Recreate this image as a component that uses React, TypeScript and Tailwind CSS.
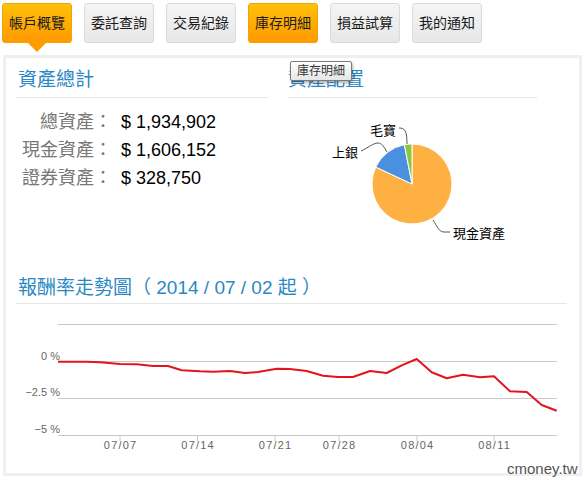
import React from "react";

const tabs = [
  { label: "帳戶概覽", active: true },
  { label: "委託查詢", active: false },
  { label: "交易紀錄", active: false },
  { label: "庫存明細", active: true },
  { label: "損益試算", active: false },
  { label: "我的通知", active: false },
];

const rows = [
  { label: "總資產：", value: "$ 1,934,902" },
  { label: "現金資產：", value: "$ 1,606,152" },
  { label: "證券資產：", value: "$ 328,750" },
];

const pts: [number, number][] = [
  [58, 361.7], [86.7, 361.7], [100, 362.3], [120, 364], [136.7, 364.3], [153, 366], [168, 366],
  [181.7, 370.3], [200, 371.3], [213, 371.7], [230, 371], [245, 373], [258, 372], [276.7, 368.7],
  [290, 369], [306.7, 371], [323, 375.7], [338, 377], [353, 377], [370, 371], [386.7, 373],
  [401.7, 365.3], [416.7, 359], [431.7, 372.3], [446.7, 378.3], [463, 374.7], [480, 377.3],
  [494, 376.3], [510, 391.3], [526.7, 392], [541.7, 405], [556.7, 410.7],
];

const ticks = [
  { x: 120, l: "07/07" },
  { x: 197.5, l: "07/14" },
  { x: 275, l: "07/21" },
  { x: 339, l: "07/28" },
  { x: 417, l: "08/04" },
  { x: 494, l: "08/11" },
];

function slice(cx: number, cy: number, r: number, a0: number, a1: number) {
  const rad = (a: number) => (a * Math.PI) / 180;
  const p = (a: number) => [cx + r * Math.sin(rad(a)), cy - r * Math.cos(rad(a))];
  const [x0, y0] = p(a0);
  const [x1, y1] = p(a1);
  const large = a1 - a0 > 180 ? 1 : 0;
  return `M ${cx} ${cy} L ${x0} ${y0} A ${r} ${r} 0 ${large} 1 ${x1} ${y1} Z`;
}

function Pie() {
  const cx = 412;
  const cy = 184;
  const r = 40;
  return (
    <svg width="249" height="168" viewBox="288 98 249 168" className="block">
      <path d={slice(cx, cy, r, 0, 295)} fill="#ffb042" stroke="#fff" strokeWidth="1" />
      <path d={slice(cx, cy, r, 295, 349)} fill="#4a8fe0" stroke="#fff" strokeWidth="1" />
      <path d={slice(cx, cy, r, 349, 360)} fill="#8cc63f" stroke="#fff" strokeWidth="1" />
      <g fill="none" stroke="#555" strokeWidth="1">
        <path d="M 399 128 C 405 128 407 131 407 144" />
        <path d="M 361 151 C 368 148 373 143 378 143 C 382 143 384 147 387 152" />
        <path d="M 433 220 C 437 226 439 232 444 232 L 450 232" />
      </g>
      <g fontFamily="'Noto Sans CJK TC', sans-serif" fontSize="13" fill="#000">
        <text x="370" y="135">毛寶</text>
        <text x="332" y="157">上銀</text>
        <text x="453" y="238">現金資產</text>
      </g>
    </svg>
  );
}

function Chart() {
  const d = pts.map((p, i) => `${i === 0 ? "M" : "L"} ${p[0]} ${p[1]}`).join(" ");
  return (
    <svg width="551" height="156" viewBox="16 304 551 156" className="block">
      <g stroke="#c8c8c8" strokeWidth="1">
        <line x1="58" y1="324.5" x2="557" y2="324.5" />
        <line x1="58" y1="361.5" x2="557" y2="361.5" />
        <line x1="58" y1="398.5" x2="557" y2="398.5" />
        <line x1="58" y1="435.5" x2="557" y2="435.5" />
      </g>
      <g stroke="#c8c8c8" strokeWidth="1">
        {ticks.map((t) => (
          <line key={t.l} x1={t.x} y1="435" x2={t.x} y2="441" />
        ))}
      </g>
      <g fontFamily="'Liberation Sans', sans-serif" fontSize="11" fill="#666" textAnchor="end">
        <text x="60" y="360">0 %</text>
        <text x="60" y="396">−2.5 %</text>
        <text x="60" y="433">−5 %</text>
      </g>
      <g fontFamily="'Liberation Sans', sans-serif" fontSize="11" fill="#666" textAnchor="middle" letterSpacing="1.2">
        {ticks.map((t) => (
          <text key={t.l} x={t.x + 0.6} y="449">
            {t.l}
          </text>
        ))}
      </g>
      <path d={d} fill="none" stroke="#e3141c" strokeWidth="2" strokeLinejoin="round" />
    </svg>
  );
}

export default function App() {
  return (
    <div className="relative w-[586px] h-[480px] bg-white overflow-hidden font-['Liberation_Sans','Noto_Sans_CJK_TC',sans-serif]">
      <div className="flex gap-[12px] pl-[2px] pt-[3px]">
        {tabs.map((t, i) => (
          <div
            key={t.label}
            className={
              t.active
                ? "relative w-[70px] h-[40px] flex items-center justify-center rounded-[3px] border border-[#f3a200] bg-linear-to-b from-[#ffc00c] to-[#ff9a00] text-[14px] text-[#1a1a1a]"
                : "relative w-[70px] h-[40px] flex items-center justify-center rounded-[3px] border border-[#dadada] bg-linear-to-b from-[#f5f5f5] to-[#e7e7e7] text-[14px] text-[#1a1a1a]"
            }
          >
            {t.label}
            {i === 0 && (
              <div className="absolute left-[25px] top-[39px] w-0 h-0 border-l-[9px] border-r-[9px] border-t-[9px] border-l-transparent border-r-transparent border-t-[#ff9a00]" />
            )}
          </div>
        ))}
      </div>

      <div className="mt-[12px] ml-[3px] w-[579px] h-[421px] border-[3px] border-[#efefef] bg-white">
        <div className="flex h-[208px] pl-[10px] gap-[20px]">
          <div className="w-[252px]">
            <div className="pt-[8px] pb-[3px] leading-[28px] border-b border-[#e6e6e6] text-[19px] text-[#2a88c4] pl-[2px]">
              資產總計
            </div>
            <div className="mt-[10px] flex flex-col">
              {rows.map((r) => (
                <div key={r.label} className="flex items-center h-[28px]">
                  <div className="w-[96px] text-right text-[18px] text-[#777]">{r.label}</div>
                  <div className="ml-[9px] text-[18px] text-black">{r.value}</div>
                </div>
              ))}
            </div>
          </div>
          <div className="w-[249px]">
            <div className="pt-[8px] pb-[3px] leading-[28px] border-b border-[#e6e6e6] text-[19px] text-[#2a88c4]">
              資產配置
            </div>
            <Pie />
          </div>
        </div>
        <div className="ml-[10px] w-[551px]">
          <div className="pt-[8px] pb-[1px] leading-[28px] border-b border-[#e6e6e6] text-[19px] text-[#2a88c4] pl-[2px] whitespace-nowrap">
            報酬率走勢圖（ 2014 / 07 / 02 起 ）
          </div>
          <Chart />
        </div>
      </div>

      <div className="absolute left-[290px] top-[61px] px-[6px] h-[20px] flex items-center rounded-[2px] border border-[#7a7a7a] bg-linear-to-b from-[#ffffff] to-[#e6e6e6] shadow-[1px_2px_3px_rgba(0,0,0,0.3)] text-[12px] text-[#333]">
        庫存明細
      </div>

      <div className="absolute left-[507px] top-[459px] text-[15px] leading-[20px] text-[#555]">cmoney.tw</div>
    </div>
  );
}
